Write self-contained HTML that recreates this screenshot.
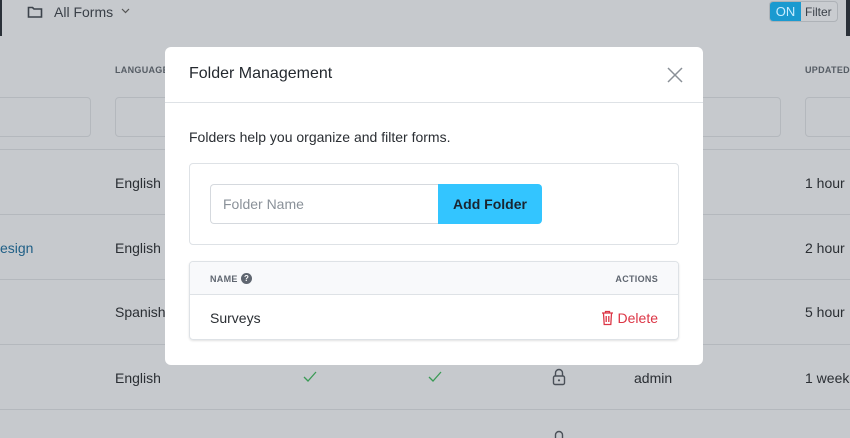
<!DOCTYPE html>
<html><head><meta charset="utf-8"><style>
*{box-sizing:border-box;margin:0;padding:0}
body{width:850px;height:438px;overflow:hidden;background:#c6c9cd;font-family:"Liberation Sans",sans-serif;color:#212529;position:relative;font-size:14px}
.a{position:absolute}
.line{position:absolute;left:0;width:850px;height:1px;background:#b4b8bd}
.fi{position:absolute;top:97px;height:40px;border:1px solid #b4b8bd;border-radius:4px}
.t{position:absolute;font-size:14px;color:#2a2e33}
.modal{position:absolute;left:165px;top:47px;width:538px;height:318px;background:#fff;border-radius:6px}
</style></head><body>
<div class="a" style="left:0;top:0;width:2px;height:36px;background:#2a3038"></div>
<div class="a" style="left:846px;top:0;width:4px;height:36px;background:#2a3038"></div>
<svg class="a" style="left:27px;top:5px" width="16" height="14" viewBox="0 0 16 14"><path d="M1.5 2.5h4l1.5 1.5h7.5v8h-13z" fill="none" stroke="#3c434b" stroke-width="1.6"/></svg>
<div class="a" style="left:54px;top:4px;font-size:14px;color:#3a4048">All Forms</div>
<svg class="a" style="left:121px;top:8px" width="9" height="6"><path d="M1 1l3.5 3.5L8 1" fill="none" stroke="#555" stroke-width="1.2"/></svg>
<div class="a" style="left:769px;top:1px;width:69px;height:21px;border:1px solid #aeb2b7;border-radius:4px;background:#c9ccd0;overflow:hidden">
<div style="position:absolute;left:0;top:0;width:31px;height:21px;background:#1a9ad0;color:#c8ecff;font-size:13px;line-height:20px;text-align:center">ON</div>
<div style="position:absolute;left:35px;top:0;font-size:12px;line-height:20px;color:#3a4048">Filter</div></div>
<div class="a" style="left:115px;top:65px;font-size:9px;font-weight:bold;color:#555c64;letter-spacing:.3px">LANGUAGE</div>
<div class="a" style="left:805px;top:65px;font-size:9px;font-weight:bold;color:#555c64;letter-spacing:.3px">UPDATED</div>
<div class="fi" style="left:-10px;width:101px"></div>
<div class="fi" style="left:115px;width:60px"></div>
<div class="fi" style="left:690px;width:91px"></div>
<div class="fi" style="left:805px;width:60px"></div>
<div class="line" style="top:149px"></div><div class="line" style="top:214px"></div><div class="line" style="top:279px"></div><div class="line" style="top:344px"></div><div class="line" style="top:409px"></div>
<div class="t" style="left:115px;top:175px">English</div><div class="t" style="left:805px;top:175px">1 hour</div>
<div class="t" style="left:0;top:240px;color:#1f5f86">esign</div><div class="t" style="left:115px;top:240px">English</div><div class="t" style="left:805px;top:240px">2 hour</div>
<div class="t" style="left:115px;top:304px">Spanish</div><div class="t" style="left:805px;top:304px">5 hour</div>
<div class="t" style="left:115px;top:370px">English</div><div class="t" style="left:634px;top:370px">admin</div><div class="t" style="left:805px;top:370px">1 week</div>
<svg class="a" style="left:303px;top:371px" width="14" height="12"><path d="M1 6l4 4 8-9" fill="none" stroke="#3a9a55" stroke-width="1.3"/></svg>
<svg class="a" style="left:428px;top:371px" width="14" height="12"><path d="M1 6l4 4 8-9" fill="none" stroke="#3a9a55" stroke-width="1.3"/></svg>
<svg class="a" style="left:552px;top:368px" width="14" height="18"><path d="M3.5 8V5a3.5 3.5 0 0 1 7 0v3" fill="none" stroke="#4a5058" stroke-width="1.4"/><rect x="1.5" y="8" width="11" height="8.5" rx="1.5" fill="none" stroke="#4a5058" stroke-width="1.4"/><circle cx="7" cy="12.3" r="1.1" fill="#4a5058"/></svg>
<svg class="a" style="left:552px;top:430px" width="14" height="8"><path d="M3.5 8V5a3.5 3.5 0 0 1 7 0v3" fill="none" stroke="#4a5058" stroke-width="1.4"/></svg>
<div class="modal">
<div class="a" style="left:24px;top:18px;font-size:16px;color:#24292f">Folder Management</div>
<svg class="a" style="left:502px;top:20px" width="16" height="16"><path d="M1 1l14 14M15 1L1 15" stroke="#8a9097" stroke-width="1.5"/></svg>
<div class="a" style="left:0;top:55px;width:538px;height:1px;background:#dee2e6"></div>
<div class="a" style="left:24px;top:82px;font-size:14px;color:#2a2e33">Folders help you organize and filter forms.</div>
<div class="a" style="left:24px;top:116px;width:490px;height:82px;border:1px solid #dee2e6;border-radius:4px">
<div class="a" style="left:20px;top:20px;width:229px;height:40px;border:1px solid #d5d9de;border-right:none;border-radius:4px 0 0 4px;font-size:14px;color:#8a9199;line-height:38px;padding-left:12px">Folder Name</div>
<div class="a" style="left:248px;top:20px;width:104px;height:40px;background:#33c5ff;border-radius:0 4px 4px 0;font-size:14px;font-weight:bold;color:#1a2530;line-height:40px;text-align:center">Add Folder</div>
</div>
<div class="a" style="left:24px;top:214px;width:490px;height:79px;border:1px solid #dee2e6;border-radius:4px;box-shadow:0 1px 2px rgba(0,0,0,.12);overflow:hidden">
<div class="a" style="left:0;top:0;width:490px;height:33px;background:#f8f9fb;border-bottom:1px solid #dee2e6"></div>
<div class="a" style="left:20px;top:12px;font-size:9px;font-weight:bold;color:#5f6670;letter-spacing:.3px">NAME</div>
<div class="a" style="left:51px;top:11px;width:11px;height:11px;border-radius:50%;background:#5f6670;color:#fff;font-size:8px;font-weight:bold;line-height:11px;text-align:center">?</div>
<div class="a" style="right:20px;top:12px;font-size:9px;font-weight:bold;color:#5f6670;letter-spacing:.3px">ACTIONS</div>
<div class="a" style="left:20px;top:48px;font-size:14px;color:#2a2e33">Surveys</div>
<svg class="a" style="left:411px;top:48px" width="13" height="16" viewBox="0 0 13 16"><path d="M1 3h11M4.5 3V1.5h4V3M2.5 3.5l.7 11h6.6l.7-11M5.2 6v6M7.8 6v6" fill="none" stroke="#dc3545" stroke-width="1.3"/></svg>
<div class="a" style="right:20px;top:48px;font-size:14px;color:#dc3545">Delete</div>
</div>
</div>
</body></html>
